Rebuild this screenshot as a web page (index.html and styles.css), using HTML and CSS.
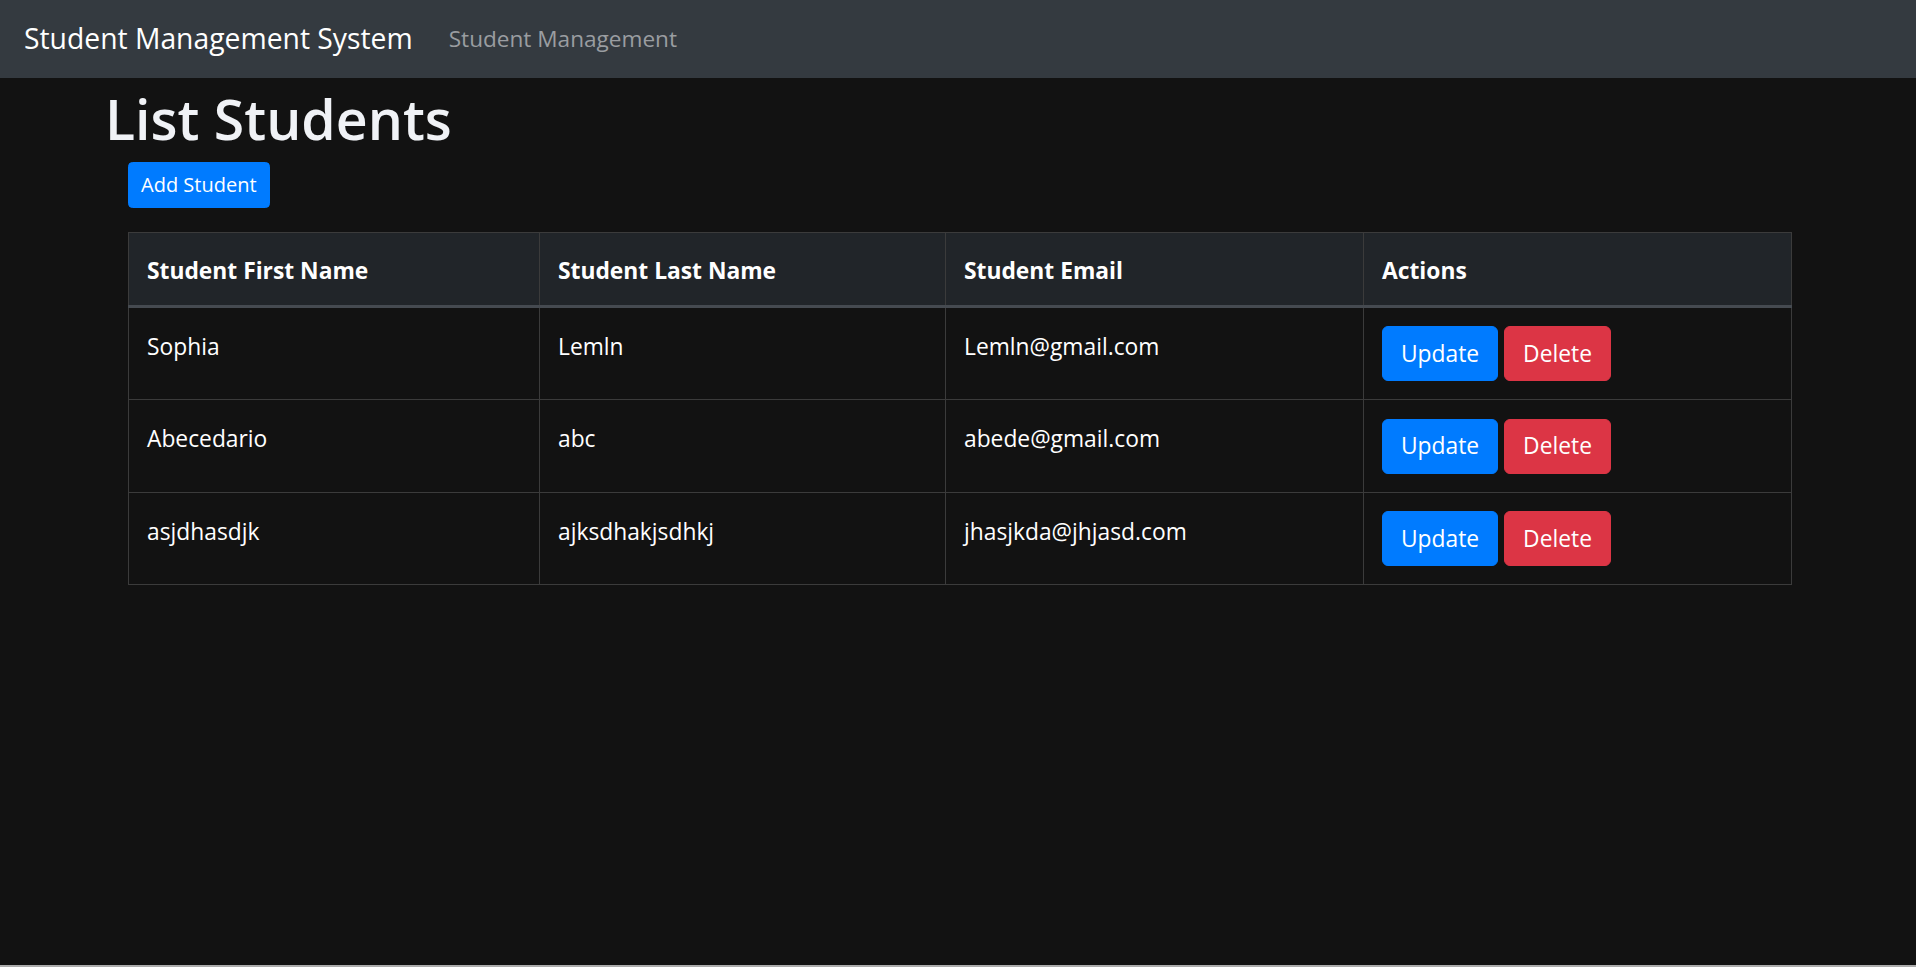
FILE: index.html
```html
<!DOCTYPE html>
<html lang="en">
<head>
<meta charset="utf-8">
<title>Student Management System</title>
<link rel="stylesheet" href="styles.css">
</head>
<body>
<div class="page">
  <nav class="navbar">
    <a class="brand" href="#">Student Management System</a>
    <a class="nav-link" href="#">Student Management</a>
  </nav>
  <main class="main">
    <h1 class="title">List Students</h1>
    <div class="content">
      <button class="btn btn-primary btn-sm">Add Student</button>
      <table class="table">
        <thead>
          <tr>
            <th class="c1">Student First Name</th>
            <th class="c2">Student Last Name</th>
            <th class="c3">Student Email</th>
            <th class="c4">Actions</th>
          </tr>
        </thead>
        <tbody>
          <tr>
            <td class="txt">Sophia</td>
            <td class="txt">Lemln</td>
            <td class="txt">Lemln@gmail.com</td>
            <td class="actions"><button class="btn btn-primary">Update</button><button class="btn btn-danger">Delete</button></td>
          </tr>
          <tr>
            <td class="txt">Abecedario</td>
            <td class="txt">abc</td>
            <td class="txt">abede@gmail.com</td>
            <td class="actions"><button class="btn btn-primary">Update</button><button class="btn btn-danger">Delete</button></td>
          </tr>
          <tr>
            <td class="txt">asjdhasdjk</td>
            <td class="txt">ajksdhakjsdhkj</td>
            <td class="txt">jhasjkda@jhjasd.com</td>
            <td class="actions"><button class="btn btn-primary">Update</button><button class="btn btn-danger">Delete</button></td>
          </tr>
        </tbody>
      </table>
    </div>
  </main>
</div>
</body>
</html>
```
FILE: styles.css
```css
* { box-sizing: border-box; }
html, body { margin: 0; padding: 0; }
body {
  background: #121212;
  color: #fff;
  font-family: "Open Sans", "Noto Sans", sans-serif;
  font-size: 22.8px;
  line-height: 36px;
}
.page {
  min-height: 100vh;
  border-bottom: 2px solid #acacac;
}
.navbar {
  height: 78px;
  background: #343a40;
  display: flex;
  align-items: center;
  padding: 0 24px;
}
.brand {
  color: #fff;
  text-decoration: none;
  font-size: 28.3px;
  line-height: 45px;
  margin-right: 24px;
  margin-top: -2px;
}
.nav-link {
  color: #9a9da1;
  text-decoration: none;
  font-size: 22.6px;
  line-height: 36px;
  padding: 0 12px;
  margin-top: -1px;
}
.main {
  padding-left: 105px;
}
.title {
  margin: 0 0 7px 0;
  padding-top: 5px;
  font-size: 55.4px;
  line-height: 72px;
  font-weight: 600;
  color: #f0f2f6;
}
.content {
  margin-left: 23px;
  width: 1664px;
}
.btn {
  display: inline-block;
  font-family: inherit;
  color: #fff;
  border: 1.5px solid transparent;
  border-radius: 6px;
  font-size: 22.8px;
  line-height: 36px;
  padding: 8.5px 18px;
  cursor: pointer;
}
.btn-sm {
  font-size: 20px;
  line-height: 31.5px;
  padding: 6px 12px;
  border-radius: 4.5px;
}
.btn-primary { background: #007bff; border-color: #007bff; }
.btn-danger { background: #dc3545; border-color: #dc3545; margin-left: 6px; }
.table {
  margin-top: 24px;
  width: 1664px;
  border-collapse: collapse;
  border: 1.5px solid #3b3b3b;
}
.table th, .table td {
  text-align: left;
  vertical-align: top;
  padding: 18px;
  border: 1.5px solid #3b3b3b;
}
.table th {
  background: #212529;
  font-weight: 700;
  padding: 20.5px 18px 15.5px;
  border-bottom: 3px solid #454a50;
}
.table td.txt { padding-top: 21px; }
.table td.actions { padding-top: 18.5px; padding-bottom: 18px; }
.c1 { width: 411px; }
.c2 { width: 406px; }
.c3 { width: 418px; }
```
